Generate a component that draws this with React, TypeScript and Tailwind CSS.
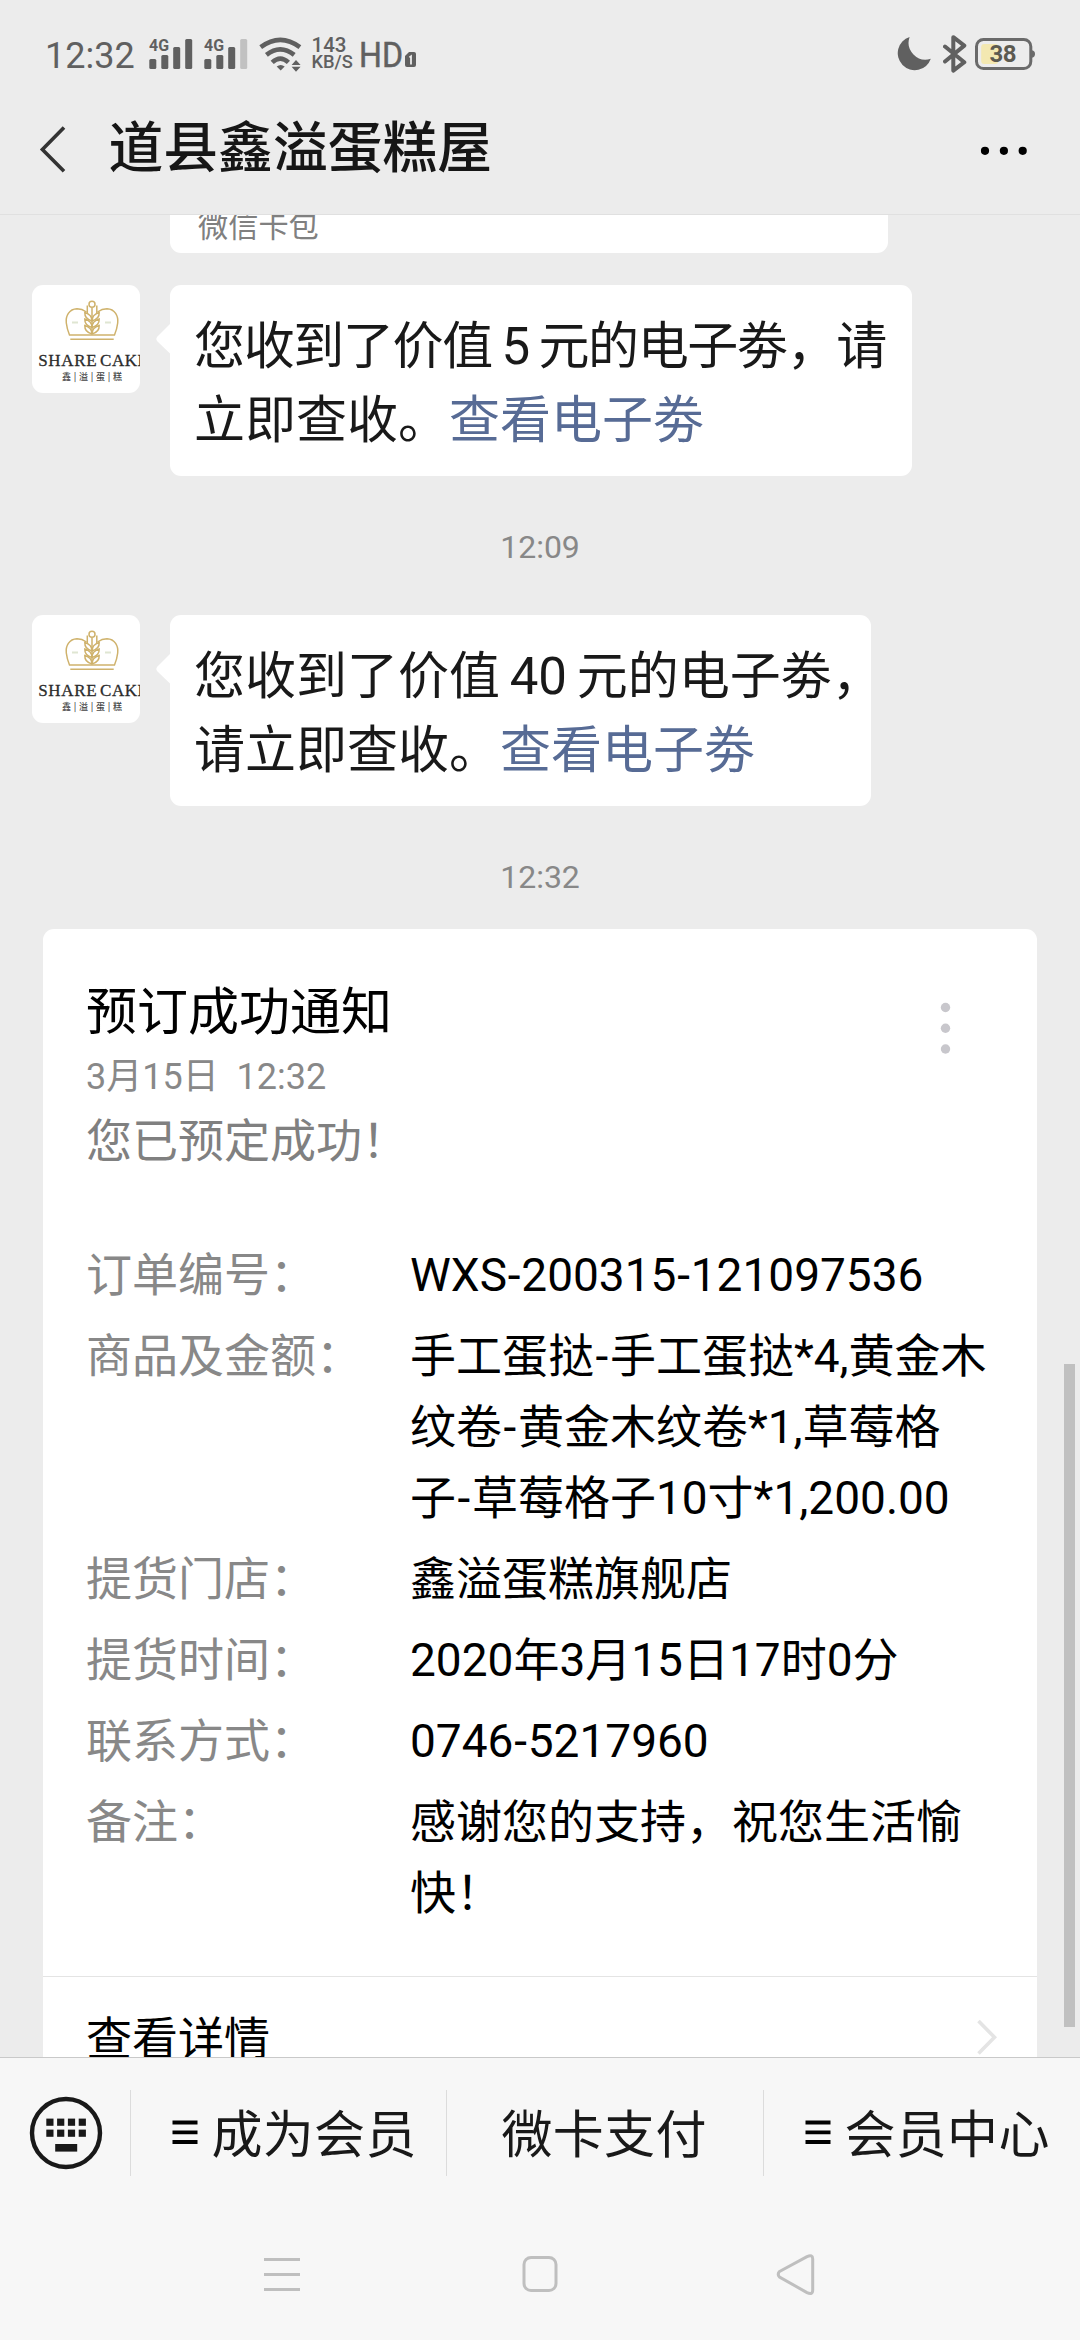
import React from "react";

const Signal = ({ weak = false }: { weak?: boolean }) => (
  <svg className="h-[32px] w-[44px] shrink-0 overflow-visible" viewBox="0 0 44 32" fill="#606060">
    <text x="0" y="13.4" fontFamily="Roboto" fontWeight="700" fontSize="17" textLength="20" lengthAdjust="spacingAndGlyphs">
      4G
    </text>
    <rect x="0.3" y="21" width="7" height="10" rx="1.5" />
    <rect x="12.3" y="17" width="7" height="14" rx="1.5" />
    <rect x="24.2" y="9" width="7" height="22" rx="1.5" />
    <rect x="36.2" y="1" width="7" height="30" rx="1.5" fill={weak ? "#c1c1c1" : "#606060"} />
  </svg>
);

const Wifi = () => (
  <svg className="h-[36px] w-[43px] shrink-0" viewBox="0 0 43 36" fill="none" stroke="#606060" strokeWidth="4.6">
    <path d="M1.7 11.2 Q21.3 -3.4 40.9 11.2" />
    <path d="M7.4 18.9 Q21.3 7.7 35.2 18.9" />
    <path d="M13.2 26.4 Q21.3 18.8 29.4 26.4" />
    <path d="M17.7 30.6 Q21.7 27.4 25.7 30.6 L21.7 34.4 Z" fill="#606060" stroke="none" />
    <path d="M32.6 29 L37 24 L41.6 29 Z M32.6 30.8 L41.6 30.8 L37 35.8 Z" fill="#606060" stroke="none" />
  </svg>
);

const StatusBar = () => (
  <div className="flex h-[80px] items-start text-[#606060]">
    <div className="ml-[45px] mt-[38px] w-[104px] text-[36px] leading-[36px]">12:32</div>
    <div className="mt-[38px] flex">
      <Signal />
      <div className="w-[10.5px]" />
      <Signal weak />
    </div>
    <div className="ml-[11px] mt-[36px]">
      <Wifi />
    </div>
    <div className="ml-[10px] mt-[37px] w-[48px] font-medium">
      <div className="text-[20.5px] leading-[17px]">143</div>
      <div className="text-[18.3px] leading-[16px]">KB/S</div>
    </div>
    <svg className="mt-[36px] h-[36px] w-[60px] overflow-visible" viewBox="0 0 60 36" fill="#606060">
      <text x="-1" y="31" fontFamily="Roboto" fontSize="35.5" textLength="44" lengthAdjust="spacingAndGlyphs" stroke="#606060" strokeWidth="0.5">
        HD
      </text>
      <path d="M49 16 H54 Q56 16 56 18 V29 Q56 31 54 31 H47 Q45 31 45 29 V20 Z" />
      <path d="M49.4 21.4 L51 20.2 V28.6" stroke="#ececec" strokeWidth="1.8" fill="none" />
    </svg>
    <div className="flex-1" />
    <svg className="mt-[37px] h-[34px] w-[34px]" viewBox="0 0 34 34" fill="#606060">
      <path d="M12.6 0 A17 17 0 1 0 33.8 21.8 A17 17 0 0 1 12.6 0 Z" />
    </svg>
    <svg className="ml-[12px] mt-[35px] h-[38px] w-[24px]" viewBox="0 0 24 38" fill="none" stroke="#606060" strokeWidth="4" strokeLinejoin="round" strokeLinecap="round">
      <path d="M2 11.5 L21.3 27.2 L10.3 35.6 V2.2 L21.3 10.6 L2 26.5" />
    </svg>
    <svg className="ml-[8px] mr-[44px] mt-[38px] h-[32px] w-[61px] overflow-visible" viewBox="0 0 61 32">
      <rect x="6.2" y="6" width="17" height="20" rx="3" fill="#f3e8b1" />
      <rect x="1.5" y="1.5" width="54.3" height="29" rx="7" fill="none" stroke="#6a6a6a" strokeWidth="3" />
      <path d="M57 12.3 Q60 13 60 16 Q60 19 57 19.7 Z" fill="#6a6a6a" />
      <text x="28" y="24.3" textAnchor="middle" fontFamily="Roboto" fontWeight="700" fontSize="24" textLength="27" fill="#5c5a50">
        38
      </text>
    </svg>
  </div>
);

const Header = () => (
  <div className="flex h-[134px] items-start">
    <svg className="ml-[39px] mt-[45px] h-[48px] w-[28px]" viewBox="0 0 28 48" fill="none" stroke="#333333" strokeWidth="3.6">
      <path d="M25 2.5 L3.4 24.4 L25 46.2" />
    </svg>
    <div className="ml-[41.5px] mt-[38px] text-[54.8px] font-medium leading-[60px] text-[#161616]">道县鑫溢蛋糕屋</div>
    <div className="flex-1" />
    <svg className="mr-[52px] mt-[66px] h-[10px] w-[48px]" viewBox="0 0 48 10">
      <circle cx="5" cy="4.8" r="4.1" />
      <circle cx="23.9" cy="4.8" r="4.1" />
      <circle cx="42.7" cy="4.8" r="4.1" />
    </svg>
  </div>
);

const Avatar = () => (
  <svg className="h-[108px] w-[108px] shrink-0 rounded-[11px] bg-white" viewBox="0 0 108 108">
    <g fill="none" stroke="#cfb26c" strokeWidth="1.5">
      <circle cx="60" cy="19.3" r="3" />
      <path d="M54.5 27 Q50 23.7 45 23.7 C37 24 33.5 31 34.3 38 Q35 44 37.5 50 H82.5 Q85 44 85.7 38 C86.500 31 83 24 75 23.7 Q70 23.7 65.500 27" />
      <path d="M38.300 54.300 H81.700" />
      <path d="M60 23 V49 M55.300 20.500 V29 M64.800 20.500 V29" />
      <path d="M60 36 Q52.500 34 52.800 27.500 Q60 29.500 60 36 Q67.500 34 67.200 27.500 Q60 29.500 60 36" />
      <path d="M60 42.500 Q52.500 40.500 52.800 34 Q60 36 60 42.500 Q67.500 40.500 67.200 34 Q60 36 60 42.500" />
      <path d="M60 49 Q52.500 47 52.800 40.500 Q60 42.500 60 49 Q67.500 47 67.200 40.500 Q60 42.500 60 49" />
    </g>
    <path d="M40 37.500 H46 M73 37.500 H79" stroke="#dfe6d2" strokeWidth="2" />
    <g fontFamily="Liberation Serif" fontSize="17" fill="#2c2c2c" stroke="#2c2c2c" strokeWidth="0.3">
      <text x="6.200" y="81.300" textLength="58.500">
        SHARE
      </text>
      <text x="68" y="81.300" textLength="48">
        CAKE
      </text>
    </g>
    <text x="30" y="95.300" fontFamily="Noto Sans CJK SC" fontWeight="500" fontSize="9" fill="#444" textLength="60">
      鑫|溢|蛋|糕
    </text>
  </svg>
);

const Message = ({ children, width }: { children: React.ReactNode; width: string }) => (
  <div className="flex h-[191px] shrink-0 items-start pl-[32px]">
    <Avatar />
    <svg className="ml-[15px] mt-[38px] h-[32px] w-[15px] shrink-0" viewBox="0 0 15 32" fill="#fff">
      <path d="M15 1 L2 14 Q0.500 16 2 18 L15 30.500 Z" />
    </svg>
    <div className={"h-[191px] rounded-[11px] bg-white pl-[24px] pt-[25px] text-[51px] leading-[74px] whitespace-nowrap text-[#191919] " + width}>
      {children}
    </div>
  </div>
);

const Time = ({ children }: { children: React.ReactNode }) => (
  <div className="flex shrink-0 justify-center text-[32px] leading-[40px] text-[#888888]">{children}</div>
);

// Hyphens sit in a slightly wider cell next to full-width characters.
const Line = ({ text }: { text: string }) => {
  const wide = /[\u4e00-\u9fff]/.test(text);
  return (
    <div>
      {text.split("-").map((part, i) => (
        <React.Fragment key={i}>
          {i > 0 && <span className={wide ? "px-[1.6px]" : "px-[0.8px]"}>-</span>}
          {part}
        </React.Fragment>
      ))}
    </div>
  );
};

const Row = ({ label, lines }: { label: string; lines: string[] }) => (
  <div className="flex">
    <div className="w-[324px] shrink-0 text-[#888888]">{label}</div>
    <div className="whitespace-nowrap text-black">
      {lines.map((l) => (
        <Line key={l} text={l} />
      ))}
    </div>
  </div>
);

const Card = () => (
  <div className="ml-[43px] h-[1200px] w-[994px] shrink-0 rounded-t-[11px] bg-white">
    <div className="flex h-[1047px] flex-col pl-[43px]">
      <div className="flex justify-between">
        <div className="pt-[54px] text-[51px] leading-[60px] text-black">预订成功通知</div>
        <svg className="mr-[86px] mt-[73px] h-[53px] w-[11px]" viewBox="0 0 11 53" fill="#c8c7cc">
          <circle cx="5.500" cy="5.500" r="4.700" />
          <circle cx="5.500" cy="26.300" r="4.700" />
          <circle cx="5.500" cy="47" r="4.700" />
        </svg>
      </div>
      <div className="-mt-[1px] text-[36px] leading-[46px] whitespace-pre text-[#888888]">{"3月15日  12:32"}</div>
      <div className="mt-[11px] text-[46px] leading-[60px] text-[#808080]">您已预定成功！</div>
      <div className="mt-[69px] flex flex-col gap-[10px] text-[46px] leading-[71px]">
        <Row label="订单编号：" lines={["WXS-200315-121097536"]} />
        <Row label="商品及金额：" lines={["手工蛋挞-手工蛋挞*4,黄金木", "纹卷-黄金木纹卷*1,草莓格", "子-草莓格子10寸*1,200.00"]} />
        <Row label="提货门店：" lines={["鑫溢蛋糕旗舰店"]} />
        <Row label="提货时间：" lines={["2020年3月15日17时0分"]} />
        <Row label="联系方式：" lines={["0746-5217960"]} />
        <Row label="备注：" lines={["感谢您的支持，祝您生活愉", "快！"]} />
      </div>
    </div>
    <div className="flex items-start justify-between border-t border-[#e4e4e4] pl-[43px]">
      <div className="pt-[32px] text-[46px] leading-[60px] text-black">查看详情</div>
      <svg className="mr-[39px] mt-[42px] h-[36px] w-[22px]" viewBox="0 0 22 36" fill="none" stroke="#e4e4e4" strokeWidth="3.600">
        <path d="M2.500 2 L18.500 18.300 L2.500 34.500" />
      </svg>
    </div>
  </div>
);

const Bars = () => (
  <svg className="mr-[14px] h-[26px] w-[26px]" viewBox="0 0 26 26">
    <path d="M0.500 2.500 H25.500 M0.500 12.300 H25.500 M0.500 22 H25.500" stroke="#000" strokeWidth="3.800" />
  </svg>
);

const KeyboardIcon = () => (
  <svg className="h-[74px] w-[74px]" viewBox="0 0 74 74" fill="#191919">
    <circle cx="37" cy="37" r="34" fill="none" stroke="#191919" strokeWidth="4.400" />
    {[17.3, 28.1, 38.900, 49.700].map((x) => (
      <g key={x}>
        <rect x={x} y="22.600" width="7.200" height="7.200" />
        <rect x={x} y="33.600" width="7.200" height="7.200" />
      </g>
    ))}
    <rect x="26.200" y="48" width="22" height="7.600" />
  </svg>
);

const BottomBar = () => (
  <div className="h-[283px] shrink-0 border-t border-[#c9c9c9] bg-[#f7f7f7]">
    <div className="flex h-[150px] items-center text-[51px] leading-[60px] tracking-[0.3px] text-[#191919]">
      <div className="flex h-[86px] w-[131px] items-center border-r border-[#dcdcdc] pl-[28.500px]">
        <KeyboardIcon />
      </div>
      <div className="flex h-[86px] w-[316px] items-center border-r border-[#dcdcdc] pl-[40.500px]">
        <Bars />
        <span className="pt-[6px]">成为会员</span>
      </div>
      <div className="flex h-[86px] w-[317px] items-center border-r border-[#dcdcdc] pl-[54.500px]">
        <span className="pt-[6px]">微卡支付</span>
      </div>
      <div className="flex h-[86px] items-center pl-[40.500px]">
        <Bars />
        <span className="pt-[6px]">会员中心</span>
      </div>
    </div>
    <svg className="ml-[260px] mt-[42px] h-[50px] w-[560px]" viewBox="0 0 560 50" fill="none" stroke="#bfbfbf" strokeWidth="3">
      <path d="M4 9.500 H40 M4 24.500 H40 M4 39.500 H40" />
      <rect x="264" y="7.500" width="32" height="33" rx="7" />
      <path d="M519.500 21.500 L547 6.600 Q552.700 4 552.700 9 V40 Q552.700 45.400 547 42.600 L519.500 27 Q517 24.200 519.500 21.500 Z" />
    </svg>
  </div>
);

export default function App() {
  return (
    <div className="relative flex h-[2340px] w-[1080px] flex-col overflow-hidden bg-[#ececec] font-[Roboto,'Noto_Sans_CJK_SC',sans-serif]">
      <StatusBar />
      <Header />
      <div className="flex h-[1843px] flex-col overflow-hidden border-t border-[#e0e0e0]">
        <div className="ml-[170px] h-[38px] w-[718px] shrink-0 rounded-b-[11px] bg-white pl-[28px]">
          <div className="-mt-[8px] text-[30.200px] leading-[40px] text-[#808080]">微信卡包</div>
        </div>
        <div className="h-[32px] shrink-0" />
        <Message width="w-[742px]">
          <div className="tracking-[-1.350px] [word-spacing:-1.700px]">您收到了价值 5 元的电子劵，请</div>
          <div>
            立即查收。<span className="text-[#576b95]">查看电子劵</span>
          </div>
        </Message>
        <div className="h-[139px] shrink-0 pt-[51px]">
          <Time>12:09</Time>
        </div>
        <Message width="w-[701px]">
          <div className="[word-spacing:-3px]">您收到了价值 40 元的电子劵，</div>
          <div>
            请立即查收。<span className="text-[#576b95]">查看电子劵</span>
          </div>
        </Message>
        <div className="h-[123px] shrink-0 pt-[51px]">
          <Time>12:32</Time>
        </div>
        <Card />
      </div>
      <div className="absolute left-[1064px] top-[1364px] h-[663px] w-[11px] bg-[#c0c0c0]" />
      <BottomBar />
    </div>
  );
}
